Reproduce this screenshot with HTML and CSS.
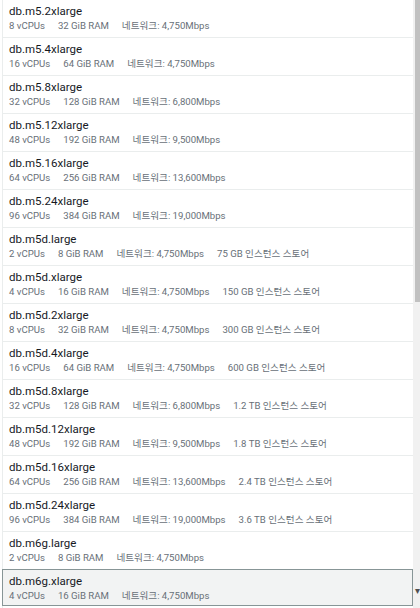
FILE: index.html
```html
<!DOCTYPE html>
<html>
<head>
    <title>인스턴스 클래스</title>
    <link rel="stylesheet" href="styles.css">
</head>
<body>
    <div class="dropdown">
        <ul class="options">
            <li class="option">
                <div class="option-label">db.m5.2xlarge</div>
                <div class="option-tags"><span>8 vCPUs</span><span>32 GiB RAM</span><span>네트워크: 4,750Mbps</span></div>
            </li>
            <li class="option">
                <div class="option-label">db.m5.4xlarge</div>
                <div class="option-tags"><span>16 vCPUs</span><span>64 GiB RAM</span><span>네트워크: 4,750Mbps</span></div>
            </li>
            <li class="option">
                <div class="option-label">db.m5.8xlarge</div>
                <div class="option-tags"><span>32 vCPUs</span><span>128 GiB RAM</span><span>네트워크: 6,800Mbps</span></div>
            </li>
            <li class="option">
                <div class="option-label">db.m5.12xlarge</div>
                <div class="option-tags"><span>48 vCPUs</span><span>192 GiB RAM</span><span>네트워크: 9,500Mbps</span></div>
            </li>
            <li class="option">
                <div class="option-label">db.m5.16xlarge</div>
                <div class="option-tags"><span>64 vCPUs</span><span>256 GiB RAM</span><span>네트워크: 13,600Mbps</span></div>
            </li>
            <li class="option">
                <div class="option-label">db.m5.24xlarge</div>
                <div class="option-tags"><span>96 vCPUs</span><span>384 GiB RAM</span><span>네트워크: 19,000Mbps</span></div>
            </li>
            <li class="option">
                <div class="option-label">db.m5d.large</div>
                <div class="option-tags"><span>2 vCPUs</span><span>8 GiB RAM</span><span>네트워크: 4,750Mbps</span><span>75 GB 인스턴스 스토어</span></div>
            </li>
            <li class="option">
                <div class="option-label">db.m5d.xlarge</div>
                <div class="option-tags"><span>4 vCPUs</span><span>16 GiB RAM</span><span>네트워크: 4,750Mbps</span><span>150 GB 인스턴스 스토어</span></div>
            </li>
            <li class="option">
                <div class="option-label">db.m5d.2xlarge</div>
                <div class="option-tags"><span>8 vCPUs</span><span>32 GiB RAM</span><span>네트워크: 4,750Mbps</span><span>300 GB 인스턴스 스토어</span></div>
            </li>
            <li class="option">
                <div class="option-label">db.m5d.4xlarge</div>
                <div class="option-tags"><span>16 vCPUs</span><span>64 GiB RAM</span><span>네트워크: 4,750Mbps</span><span>600 GB 인스턴스 스토어</span></div>
            </li>
            <li class="option">
                <div class="option-label">db.m5d.8xlarge</div>
                <div class="option-tags"><span>32 vCPUs</span><span>128 GiB RAM</span><span>네트워크: 6,800Mbps</span><span>1.2 TB 인스턴스 스토어</span></div>
            </li>
            <li class="option">
                <div class="option-label">db.m5d.12xlarge</div>
                <div class="option-tags"><span>48 vCPUs</span><span>192 GiB RAM</span><span>네트워크: 9,500Mbps</span><span>1.8 TB 인스턴스 스토어</span></div>
            </li>
            <li class="option">
                <div class="option-label">db.m5d.16xlarge</div>
                <div class="option-tags"><span>64 vCPUs</span><span>256 GiB RAM</span><span>네트워크: 13,600Mbps</span><span>2.4 TB 인스턴스 스토어</span></div>
            </li>
            <li class="option">
                <div class="option-label">db.m5d.24xlarge</div>
                <div class="option-tags"><span>96 vCPUs</span><span>384 GiB RAM</span><span>네트워크: 19,000Mbps</span><span>3.6 TB 인스턴스 스토어</span></div>
            </li>
            <li class="option">
                <div class="option-label">db.m6g.large</div>
                <div class="option-tags"><span>2 vCPUs</span><span>8 GiB RAM</span><span>네트워크: 4,750Mbps</span></div>
            </li>
            <li class="option highlighted">
                <div class="option-label">db.m6g.xlarge</div>
                <div class="option-tags"><span>4 vCPUs</span><span>16 GiB RAM</span><span>네트워크: 4,750Mbps</span></div>
            </li>
        </ul>
        <div class="scrollbar">
            <div class="scrollbar-thumb"></div>
            <div class="scrollbar-arrow">&#9662;</div>
        </div>
    </div>
</body>
</html>
```

FILE: styles.css
```css
body {
    margin: 0;
    background-color: #ffffff;
    font-family: Roboto, "Noto Sans CJK KR", sans-serif;
    overflow: hidden;
}
.dropdown {
    display: flex;
    height: 608px;
    padding-left: 2px;
    overflow: hidden;
}
.options {
    flex: 1;
    min-width: 0;
    list-style: none;
    margin: 0;
    padding: 0;
    border-left: 1px solid #eaeded;
}
.option {
    height: 37px;
    padding: 0 6px;
    border-bottom: 1px solid #eaeded;
    overflow: hidden;
}
.option.highlighted {
    height: 35px;
    margin-top: -1px;
    margin-left: -1px;
    border: 1px solid #879596;
    background-color: #f2f3f3;
}
.option-label {
    padding-top: 4px;
    font-size: 11.5px;
    line-height: 15px;
    color: #16191f;
}
.option-tags {
    font-size: 9.6px;
    line-height: 14px;
    color: #687078;
    white-space: nowrap;
}
.option-tags span {
    margin-right: 13px;
}
.scrollbar {
    flex: none;
    width: 7px;
    display: flex;
    flex-direction: column;
    background-color: #f1f1f1;
}
.scrollbar-thumb {
    height: 302px;
    margin-left: 2px;
    background-color: #c1c1c1;
}
.scrollbar-arrow {
    margin-top: 284px;
    margin-left: 2px;
    font-size: 10px;
    line-height: 10px;
    color: #505050;
}
```
